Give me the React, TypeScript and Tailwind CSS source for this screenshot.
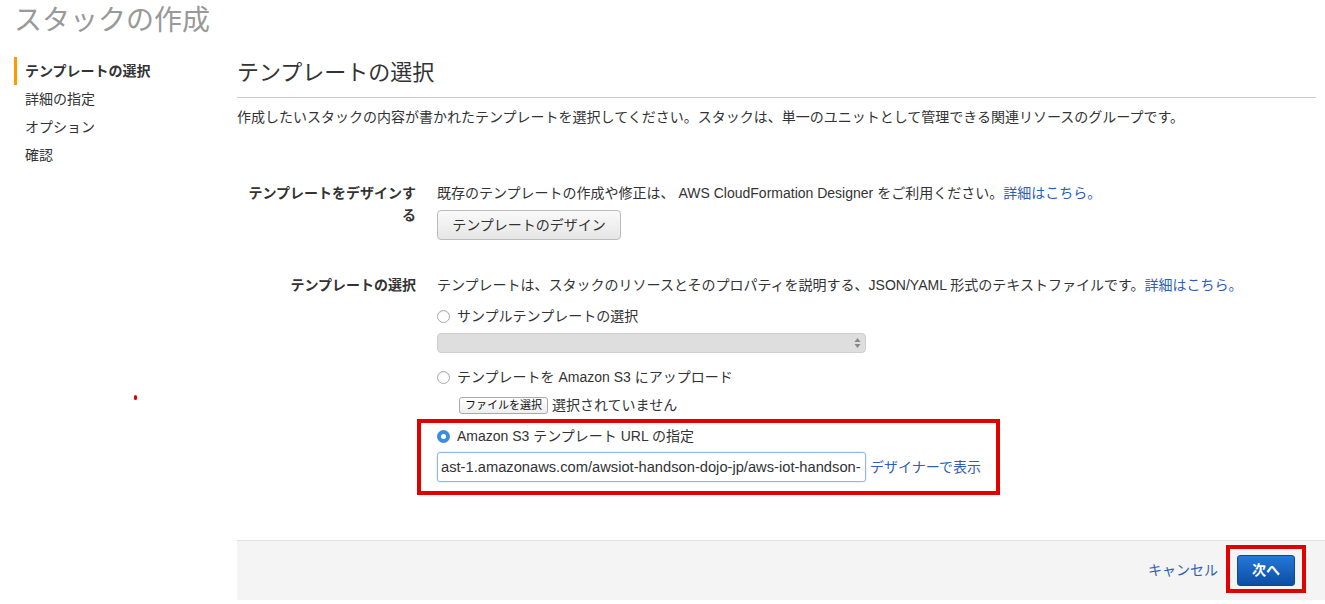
function Radio({ checked = false }: { checked?: boolean }) {
  if (checked) {
    return (
      <span className="flex h-[13px] w-[13px] shrink-0 items-center justify-center rounded-full bg-[#3b8de0]">
        <span className="h-[5px] w-[5px] rounded-full bg-white" />
      </span>
    );
  }
  return (
    <span className="h-[13px] w-[13px] shrink-0 rounded-full border border-[#a9a9a9] bg-white shadow-[inset_0_1px_1px_rgba(0,0,0,0.08)]" />
  );
}

const font = { fontFamily: '"Liberation Sans", "Noto Sans CJK JP", sans-serif' };

export default function App() {
  return (
    <div className="h-[604px] w-[1325px] overflow-hidden bg-white text-[14px] text-[#333]" style={font}>
      <h1 className="pl-[14px] pt-[2px] text-[28px] leading-[38px] text-[#999]">スタックの作成</h1>

      <div className="mt-[17px] flex">
        {/* side steps */}
        <div className="w-[237px] shrink-0 pl-[14px]">
          <div className="flex h-[28px] items-center border-l-[3px] border-[#f90] pl-[8px] font-bold">
            テンプレートの選択
          </div>
          <div className="flex h-[28px] items-center pl-[11px]">詳細の指定</div>
          <div className="flex h-[28px] items-center pl-[11px]">オプション</div>
          <div className="flex h-[28px] items-center pl-[11px]">確認</div>
          <div className="ml-[120px] mt-[226px] h-[5px] w-[3px] rounded-full bg-[#e00000]" />
        </div>

        {/* main */}
        <div className="flex-1 pt-[2px]">
          <h2 className="text-[22px] leading-[28px] text-[#333]">テンプレートの選択</h2>
          <div className="mr-[9px] mt-[10px] border-t border-[#ccc]" />
          <p className="mt-[9px] leading-[20px]">
            作成したいスタックの内容が書かれたテンプレートを選択してください。スタックは、単一のユニットとして管理できる関連リソースのグループです。
          </p>

          {/* design row */}
          <div className="mt-[55px] flex">
            <div className="w-[179px] shrink-0 text-right font-bold leading-[22px]">
              テンプレートをデザインす
              <br />る
            </div>
            <div className="ml-[21px]">
              <div className="leading-[22px]">
                既存のテンプレートの作成や修正は、 AWS CloudFormation Designer をご利用ください。
                <span className="text-[#2d5fb5]">詳細はこちら。</span>
              </div>
              <button className="mt-[6px] flex h-[30px] w-[184px] items-center justify-center rounded-[4px] border border-[#bbb] bg-gradient-to-b from-[#fafafa] to-[#e6e6e6] text-[14px] text-[#333]">
                テンプレートのデザイン
              </button>
            </div>
          </div>

          {/* template select row */}
          <div className="mt-[34px] flex">
            <div className="w-[179px] shrink-0 text-right font-bold leading-[22px]">テンプレートの選択</div>
            <div className="ml-[21px]">
              <div className="leading-[22px]">
                テンプレートは、スタックのリソースとそのプロパティを説明する、JSON/YAML 形式のテキストファイルです。
                <span className="text-[#2d5fb5]">詳細はこちら。</span>
              </div>

              <div className="mt-[9px] flex h-[22px] items-center gap-[7px]">
                <Radio />
                <span>サンプルテンプレートの選択</span>
              </div>
              <div className="mt-[6px] flex h-[20px] w-[429px] items-center justify-end rounded-[4px] border border-[#cfcfcf] bg-[#dedede] pr-[4px]">
                <svg width="7" height="12" viewBox="0 0 7 12">
                  <path d="M3.5 1 L6.5 5 L0.5 5 Z" fill="#888" />
                  <path d="M3.5 11 L6.5 7 L0.5 7 Z" fill="#888" />
                </svg>
              </div>

              <div className="mt-[13px] flex h-[22px] items-center gap-[7px]">
                <Radio />
                <span>テンプレートを Amazon S3 にアップロード</span>
              </div>
              <div className="ml-[22px] mt-[8px] flex h-[18px] items-center gap-[4px]">
                <button className="flex h-[17px] items-center rounded-[3px] border border-[#aaa] bg-gradient-to-b from-white to-[#eee] px-[5px] text-[11px] text-[#111]">
                  ファイルを選択
                </button>
                <span>選択されていません</span>
              </div>

              <div className="-ml-[20px] mt-[5px] w-[583px] border-4 border-[#e00000] pb-[9px] pl-[16px] pt-[2px]">
                <div className="flex h-[22px] items-center gap-[7px]">
                  <Radio checked />
                  <span>Amazon S3 テンプレート URL の指定</span>
                </div>
                <div className="mt-[5px] flex items-center gap-[4px]">
                  <div className="flex h-[30px] w-[429px] items-center overflow-hidden whitespace-nowrap rounded-[3px] border border-[#8fb8e8] pl-[3px] text-[14.7px] shadow-[0_0_2px_rgba(80,150,230,0.4)]">
                    <span>ast-1.amazonaws.com/awsiot-handson-dojo-jp/aws-iot-handson-</span>
                  </div>
                  <span className="text-[#2d5fb5]">デザイナーで表示</span>
                </div>
              </div>
            </div>
          </div>

          {/* footer */}
          <div className="mt-[45px] flex h-[60px] items-center justify-end border-t border-[#e0e0e0] bg-[#f4f4f4] pr-[19px]">
            <span className="mr-[8px] text-[#2d5fb5]">キャンセル</span>
            <div className="mb-[3px] border-4 border-[#e00000] px-[7px] pb-[3px] pt-[6px]">
              <button className="flex h-[31px] w-[58px] items-center justify-center rounded-[3px] border border-[#0b4a95] bg-gradient-to-b from-[#2478d8] to-[#0b4fa3] text-[14px] font-bold text-white">
                次へ
              </button>
            </div>
          </div>
        </div>
      </div>
    </div>
  );
}
